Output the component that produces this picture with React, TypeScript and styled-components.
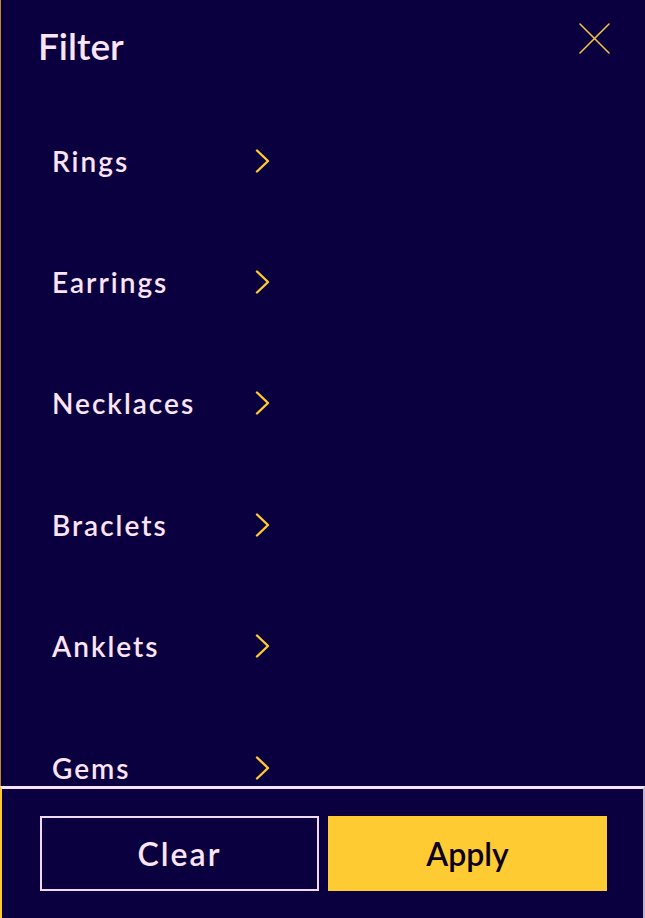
import React from "react";
import styled, { createGlobalStyle } from "styled-components";

const GlobalStyle = createGlobalStyle`
  html, body {
    margin: 0;
    padding: 0;
    background: #0b003f;
  }
  * {
    box-sizing: border-box;
  }
`;

const Panel = styled.div`
  display: flex;
  flex-direction: column;
  height: 918px;
  width: 645px;
  background: #0b003f;
  font-family: Lato, "Noto Sans", sans-serif;
  color: #fbe4f5;
`;

const Body = styled.div`
  flex: 1;
  min-height: 0;
  overflow: hidden;
  border-left: 1px solid #b98a22;
`;

const Header = styled.div`
  display: flex;
  justify-content: space-between;
  align-items: flex-start;
  padding: 23px 35px 0 37px;
  height: 100px;
`;

const Title = styled.h2`
  margin: 0;
  margin-top: 1px;
  font-size: 37px;
  font-weight: 600;
  line-height: 44px;
`;

const CloseButton = styled.button`
  background: none;
  border: none;
  padding: 0;
  width: 31px;
  height: 31px;
  cursor: pointer;
  display: block;
`;

const List = styled.ul`
  list-style: none;
  margin: 0;
  padding: 0;
`;

const Row = styled.li`
  display: grid;
  grid-template-columns: 203px 15px;
  align-items: center;
  height: 121.4px;
  padding-left: 51px;
  cursor: pointer;
`;

const Label = styled.span`
  font-size: 28px;
  font-weight: 600;
  letter-spacing: 2px;
`;

const Footer = styled.div`
  flex: 0 0 132px;
  display: grid;
  grid-template-columns: 279px 279px;
  gap: 9px;
  padding: 27px 0 0 38px;
  border-top: 3px solid #f5e2f3;
  border-left: 2px solid #ffcb31;
  border-right: 2px solid #bdb6c8;
`;

const Button = styled.button<{ $primary?: boolean }>`
  height: 75px;
  font-family: Lato, "Noto Sans", sans-serif;
  font-size: 32px;
  font-weight: 600;
  letter-spacing: ${(p) => (p.$primary ? "0" : "2px")};
  cursor: pointer;
  background: ${(p) => (p.$primary ? "#ffcb33" : "transparent")};
  color: ${(p) => (p.$primary ? "#0b0020" : "#fbe4f5")};
  border: 2px solid ${(p) => (p.$primary ? "#ffcb33" : "#f3d8ef")};
`;

const categories = ["Rings", "Earrings", "Necklaces", "Braclets", "Anklets", "Gems"];

function Chevron() {
  return (
    <svg width="15" height="24" viewBox="0 0 15 24" fill="none">
      <path
        d="M2 1.5 L13 12 L2 22.5"
        stroke="#ffcb31"
        strokeWidth="2.4"
        strokeLinecap="round"
        strokeLinejoin="round"
      />
    </svg>
  );
}

function CloseIcon() {
  return (
    <svg width="31" height="31" viewBox="0 0 31 31" fill="none">
      <path d="M1 1 L30 30 M30 1 L1 30" stroke="#f2c14a" strokeWidth="1.6" strokeLinecap="round" />
    </svg>
  );
}

export default function App() {
  return (
    <>
      <GlobalStyle />
      <Panel>
        <Body>
          <Header>
            <Title>Filter</Title>
            <CloseButton aria-label="Close">
              <CloseIcon />
            </CloseButton>
          </Header>
          <List>
            {categories.map((c) => (
              <Row key={c}>
                <Label>{c}</Label>
                <Chevron />
              </Row>
            ))}
          </List>
        </Body>
        <Footer>
          <Button>Clear</Button>
          <Button $primary>Apply</Button>
        </Footer>
      </Panel>
    </>
  );
}
